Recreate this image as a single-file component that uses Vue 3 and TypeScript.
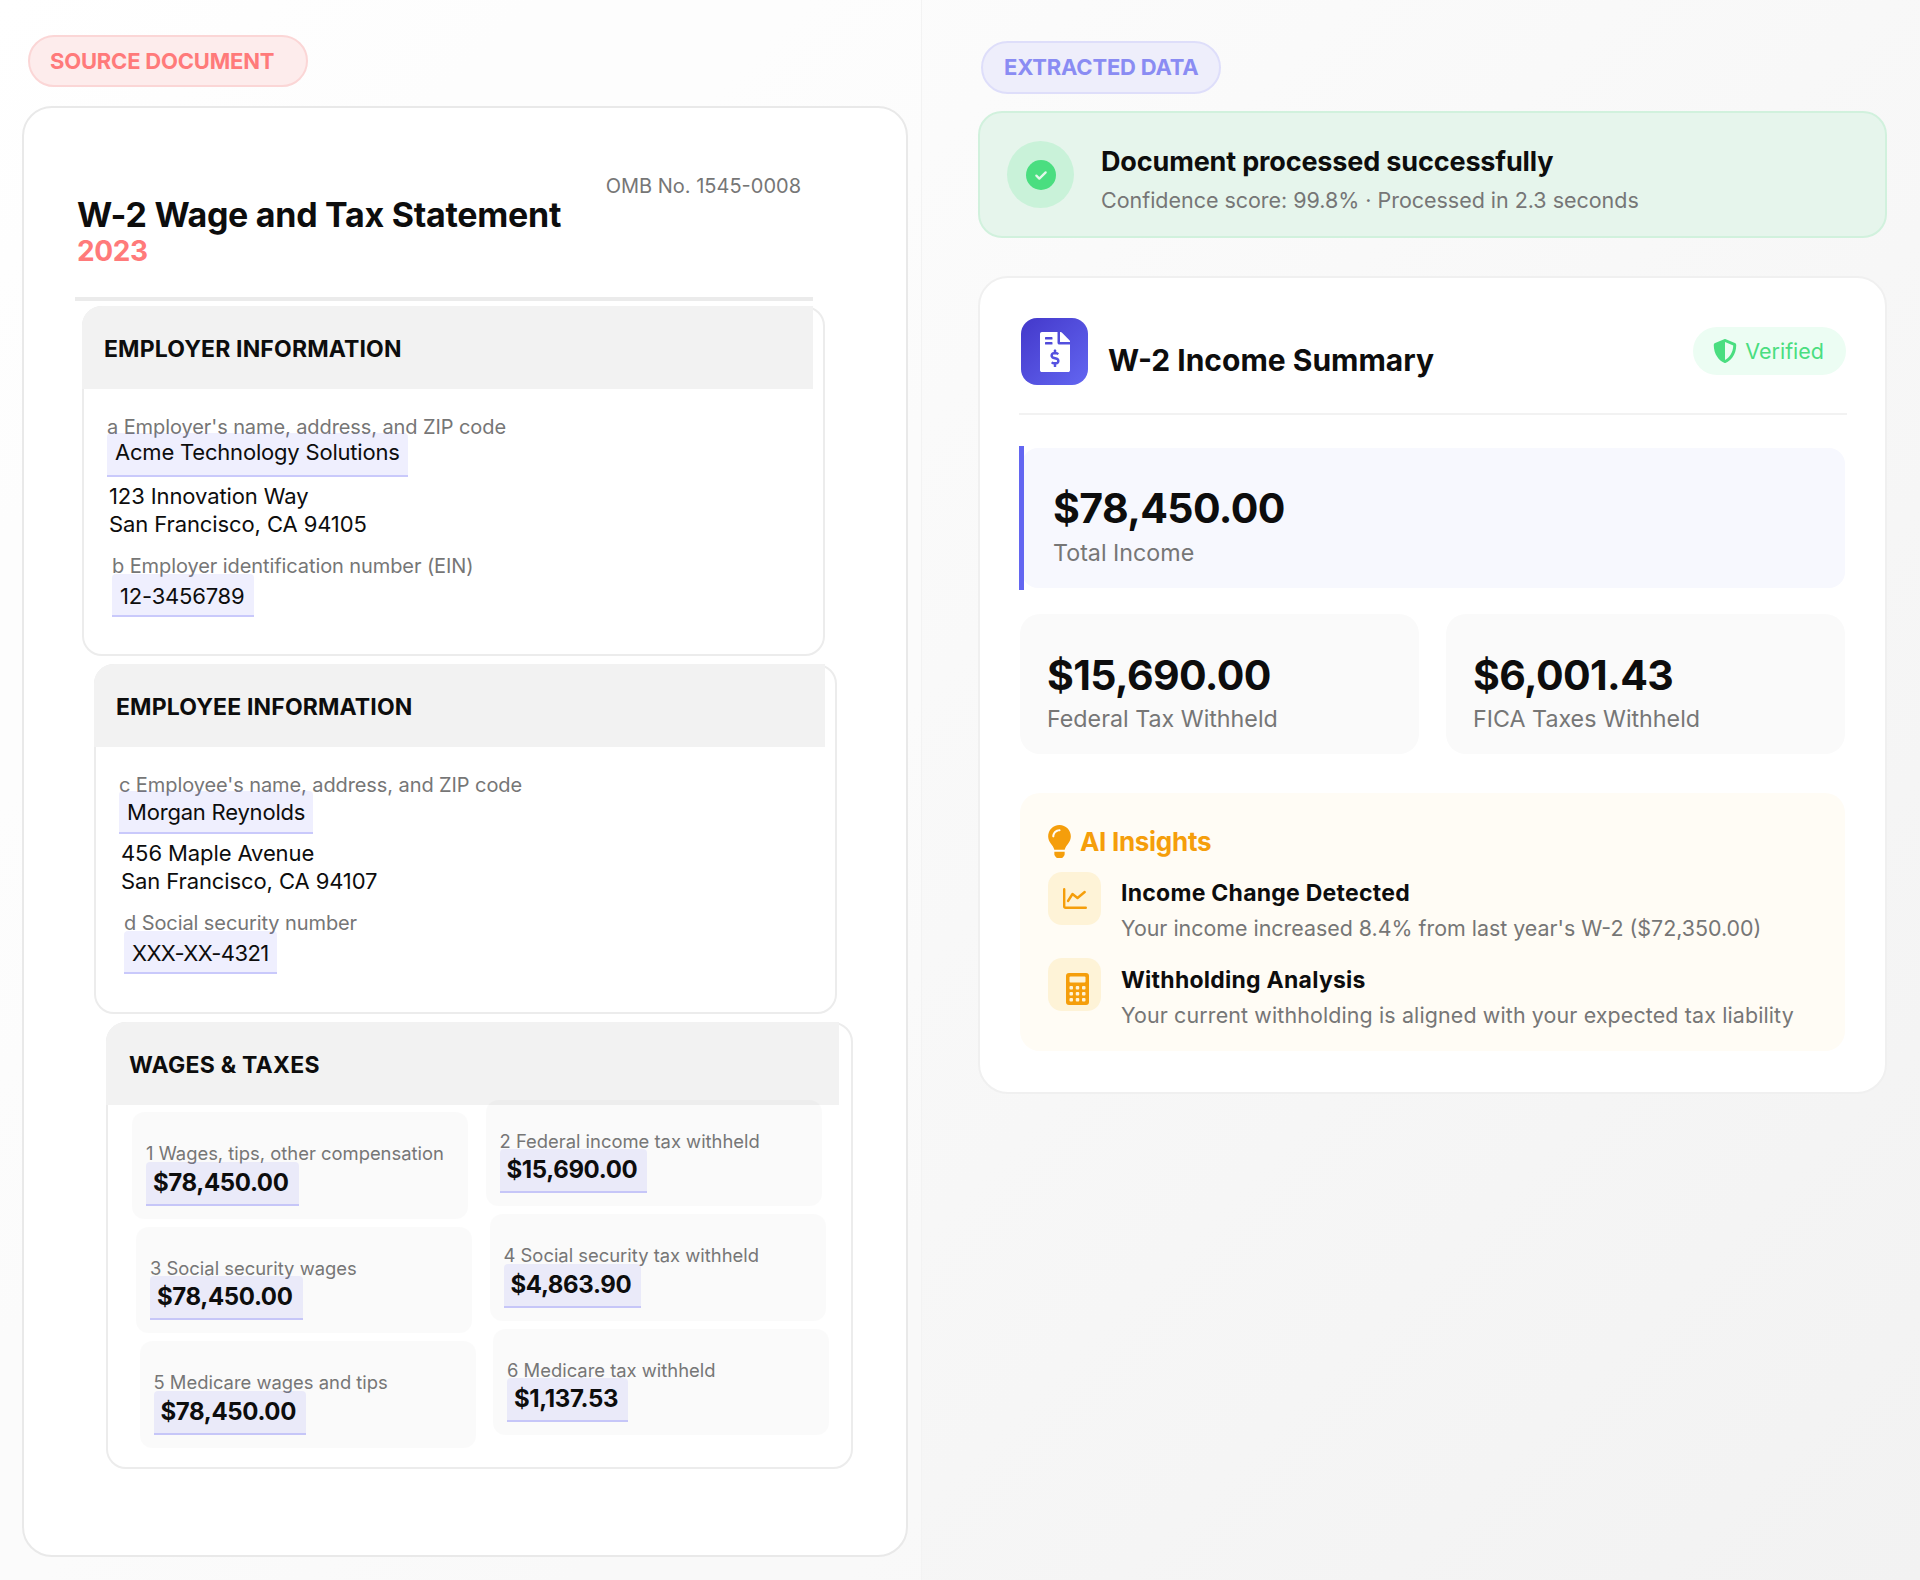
<script setup lang="ts">
interface Box {
  label: string
  value: string
}

const leftBoxes: Box[] = [
  { label: '1 Wages, tips, other compensation', value: '$78,450.00' },
  { label: '3 Social security wages', value: '$78,450.00' },
  { label: '5 Medicare wages and tips', value: '$78,450.00' },
]
const rightBoxes: Box[] = [
  { label: '2 Federal income tax withheld', value: '$15,690.00' },
  { label: '4 Social security tax withheld', value: '$4,863.90' },
  { label: '6 Medicare tax withheld', value: '$1,137.53' },
]
</script>

<template>
  <div class="page">
    <section class="source">
      <div class="pill pill-source">SOURCE DOCUMENT</div>
      <div class="doc">
        <div class="doc-inner">
          <header class="doc-head">
            <div>
              <h1 class="doc-title">W-2 Wage and Tax Statement</h1>
              <div class="doc-year">2023</div>
            </div>
            <div class="omb">OMB No. 1545-0008</div>
          </header>

          <div class="block block-1">
            <h2 class="block-head">EMPLOYER INFORMATION</h2>
            <div class="field">
              <div class="label">a Employer's name, address, and ZIP code</div>
              <span class="mark mark-name">Acme Technology Solutions</span>
              <div class="address">123 Innovation Way<br />San Francisco, CA 94105</div>
            </div>
            <div class="field field-second">
              <div class="label">b Employer identification number (EIN)</div>
              <span class="mark">12-3456789</span>
            </div>
          </div>

          <div class="block block-2">
            <h2 class="block-head">EMPLOYEE INFORMATION</h2>
            <div class="field">
              <div class="label">c Employee's name, address, and ZIP code</div>
              <span class="mark mark-name">Morgan Reynolds</span>
              <div class="address">456 Maple Avenue<br />San Francisco, CA 94107</div>
            </div>
            <div class="field field-second">
              <div class="label">d Social security number</div>
              <span class="mark">XXX-XX-4321</span>
            </div>
          </div>

          <div class="block block-3">
            <h2 class="block-head">WAGES &amp; TAXES</h2>
            <div class="tax-grid">
              <div class="tax-col">
                <div v-for="(b, i) in leftBoxes" :key="b.label" class="tax-box" :class="'step-' + i">
                  <div class="tax-label">{{ b.label }}</div>
                  <span class="mark mark-amount">{{ b.value }}</span>
                </div>
              </div>
              <div class="tax-col tax-col-right">
                <div v-for="(b, i) in rightBoxes" :key="b.label" class="tax-box" :class="'step-' + i">
                  <div class="tax-label">{{ b.label }}</div>
                  <span class="mark mark-amount">{{ b.value }}</span>
                </div>
              </div>
            </div>
          </div>
        </div>
      </div>
    </section>

    <section class="extracted">
      <div class="pill pill-extracted">EXTRACTED DATA</div>

      <div class="banner">
        <div class="banner-icon">
          <span class="banner-dot">
            <svg viewBox="0 0 24 24" width="16" height="16" fill="none" stroke="#e3f8ea" stroke-width="3.4" stroke-linecap="round" stroke-linejoin="round">
              <path d="M5 13l4.5 4.5L19 8" />
            </svg>
          </span>
        </div>
        <div class="banner-text">
          <div class="banner-title">Document processed successfully</div>
          <div class="banner-sub">Confidence score: 99.8% · Processed in 2.3 seconds</div>
        </div>
      </div>

      <div class="summary">
        <div class="summary-head">
          <div class="summary-icon">
            <svg viewBox="0 0 384 512" width="30" height="40" fill="#fff">
              <path d="M377 105L279.1 7c-4.5-4.5-10.6-7-17-7H256v128h128v-6.1c0-6.3-2.5-12.4-7-16.9zm-153 31V0H24C10.7 0 0 10.7 0 24v464c0 13.3 10.7 24 24 24h336c13.3 0 24-10.7 24-24V160H248c-13.2 0-24-10.8-24-24zM64 72c0-4.42 3.58-8 8-8h80c4.42 0 8 3.58 8 8v16c0 4.42-3.58 8-8 8H72c-4.42 0-8-3.58-8-8V72zm0 80v-16c0-4.42 3.58-8 8-8h80c4.42 0 8 3.58 8 8v16c0 4.42-3.58 8-8 8H72c-4.42 0-8-3.58-8-8zm144 263.88V440c0 4.42-3.58 8-8 8h-16c-4.42 0-8-3.58-8-8v-24.29c-11.29-.58-22.27-4.52-31.37-11.35-3.9-2.93-4.1-8.77-.57-12.14l11.75-11.21c2.77-2.64 6.89-2.76 10.13-.73 3.87 2.42 8.26 3.72 12.82 3.72h28.11c6.5 0 11.8-5.92 11.8-13.19 0-5.95-3.61-11.19-8.77-12.73l-45-13.5c-18.59-5.58-31.58-23.42-31.58-43.39 0-24.52 19.05-44.44 42.67-45.07V232c0-4.42 3.58-8 8-8h16c4.42 0 8 3.58 8 8v24.29c11.29.58 22.27 4.51 31.37 11.35 3.9 2.93 4.1 8.77.57 12.14l-11.75 11.21c-2.77 2.64-6.89 2.76-10.13.73-3.87-2.43-8.26-3.72-12.82-3.72h-28.11c-6.5 0-11.8 5.92-11.8 13.19 0 5.95 3.61 11.19 8.77 12.73l45 13.5c18.59 5.58 31.58 23.42 31.58 43.39 0 24.53-19.05 44.44-42.67 45.07z" />
            </svg>
          </div>
          <h2 class="summary-title">W-2 Income Summary</h2>
          <div class="verified">
            <svg viewBox="0 0 512 512" width="24" height="24" fill="#4ade80">
              <path d="M466.5 83.7l-192-80a48.15 48.15 0 0 0-36.9 0l-192 80C27.7 91.1 16 108.6 16 128c0 198.5 114.5 335.7 221.5 380.3 11.8 4.9 25.1 4.9 36.9 0C360.1 472.6 496 349.3 496 128c0-19.4-11.7-36.9-29.5-44.3zM256.1 446.3l-.1-381 175.9 73.3c-3.3 151.4-82.1 261.1-175.8 307.7z" />
            </svg>
            <span>Verified</span>
          </div>
        </div>

        <div class="total">
          <div class="amount">$78,450.00</div>
          <div class="amount-label">Total Income</div>
        </div>

        <div class="stats">
          <div class="stat">
            <div class="amount">$15,690.00</div>
            <div class="amount-label">Federal Tax Withheld</div>
          </div>
          <div class="stat">
            <div class="amount">$6,001.43</div>
            <div class="amount-label">FICA Taxes Withheld</div>
          </div>
        </div>

        <div class="insights">
          <div class="insights-head">
            <svg viewBox="0 0 352 512" width="23" height="33" fill="#f59e0b">
              <path d="M96.06 454.35c.01 6.29 1.87 12.45 5.36 17.69l17.09 25.69a31.99 31.99 0 0 0 26.64 14.28h61.71a31.99 31.99 0 0 0 26.64-14.28l17.09-25.69a31.989 31.989 0 0 0 5.36-17.69l.04-38.35H96.01l.05 38.35zM0 176c0 44.37 16.45 84.85 43.56 115.78 16.52 18.85 42.36 58.23 52.21 91.45.04.26.07.52.11.78h160.24c.04-.26.07-.51.11-.78 9.85-33.22 35.69-72.6 52.21-91.45C335.55 260.85 352 220.37 352 176 352 78.61 272.91-.3 175.45 0 73.44.31 0 82.97 0 176zm176-80c-44.11 0-80 35.89-80 80 0 8.84-7.16 16-16 16s-16-7.16-16-16c0-61.76 50.24-112 112-112 8.84 0 16 7.16 16 16s-7.16 16-16 16z" />
            </svg>
            <span>AI Insights</span>
          </div>

          <div class="insight">
            <div class="insight-icon">
              <svg viewBox="0 0 24 21" width="24" height="21" fill="none" stroke="#f59e0b" stroke-width="2.4" stroke-linecap="round" stroke-linejoin="round">
                <path d="M1.2 1.2v17a1.500 1.500 0 0 0 1.500 1.500H22.800" />
                <path d="M5 13l4.500-7 5 4 7.200-6" />
              </svg>
            </div>
            <div>
              <div class="insight-title">Income Change Detected</div>
              <div class="insight-text">Your income increased 8.4% from last year's W-2 ($72,350.00)</div>
            </div>
          </div>

          <div class="insight">
            <div class="insight-icon">
              <svg class="calc" viewBox="0 0 23 32" width="23" height="32">
                <rect width="23" height="32" rx="3" fill="#f59e0b" />
                <rect x="3.500" y="3.500" width="16" height="6" rx="1" fill="#fef3d7" />
                <g fill="#fef3d7">
                  <rect x="3.500" y="13" width="3.500" height="3.500" rx="1" />
                  <rect x="9.750" y="13" width="3.500" height="3.500" rx="1" />
                  <rect x="16" y="13" width="3.500" height="3.500" rx="1" />
                  <rect x="3.500" y="19" width="3.500" height="3.500" rx="1" />
                  <rect x="9.750" y="19" width="3.500" height="3.500" rx="1" />
                  <rect x="16" y="19" width="3.500" height="3.500" rx="1" />
                  <rect x="3.500" y="25" width="3.500" height="3.500" rx="1" />
                  <rect x="9.750" y="25" width="3.500" height="3.500" rx="1" />
                  <rect x="16" y="25" width="3.500" height="3.500" rx="1" />
                </g>
              </svg>
            </div>
            <div>
              <div class="insight-title">Withholding Analysis</div>
              <div class="insight-text insight-text-wide">Your current withholding is aligned with your expected tax liability</div>
            </div>
          </div>
        </div>
      </div>
    </section>
  </div>
</template>

<style>
html,
body {
  margin: 0;
  background: #f5f5f5;
}
</style>

<style scoped>
.page {
  display: flex;
  width: 1920px;
  height: 1580px;
  overflow: hidden;
  background: linear-gradient(135deg, #ffffff 0%, #f2f2f2 100%);
  font-family: Inter, "Liberation Sans", sans-serif;
  color: #0d0d0d;
}
h1,
h2 {
  margin: 0;
}

.source {
  box-sizing: border-box;
  width: 922px;
  padding: 35px 0 0 23px;
  background: rgba(255, 255, 255, 0.3);
  border-right: 1px solid #f3f3f3;
}
.pill {
  box-sizing: border-box;
  display: flex;
  align-items: center;
  border-radius: 30px;
  font-size: 22px;
  font-weight: 700;
  letter-spacing: -0.2px;
}
.pill-source {
  width: 280px;
  height: 52px;
  margin-left: 5px;
  padding: 0 0 1px 20px;
  color: #ff7a7a;
  background: #fdecec;
  border: 2px solid #fbd6d6;
}
.doc {
  box-sizing: border-box;
  width: 886px;
  height: 1451px;
  margin: 19px 0 0 -1px;
  padding: 87px 0 0 51px;
  background: #fff;
  border: 2px solid #e9e9e9;
  border-radius: 30px;
}
.doc-inner {
  width: 738px;
}
.doc-head {
  display: flex;
  justify-content: space-between;
  padding: 0 12px 28px 2px;
  border-bottom: 4px solid #ebebeb;
}
.doc-title {
  font-size: 34px;
  line-height: 40px;
  font-weight: 700;
  letter-spacing: -0.28px;
}
.doc-year {
  margin-top: -2px;
  font-size: 28px;
  line-height: 36px;
  font-weight: 700;
  letter-spacing: -0.4px;
  color: #ff7a7a;
}
.omb {
  margin-top: -21px;
  font-size: 20px;
  line-height: 24px;
  color: #767676;
}

.block {
  box-sizing: border-box;
  border: 2px solid #ececec;
  border-radius: 20px;
}
.block-1 {
  width: 743px;
  height: 350px;
  margin: 5px 0 0 7px;
}
.block-2 {
  width: 743px;
  height: 350px;
  margin: 8px 0 0 19px;
}
.block-3 {
  width: 747px;
  height: 447px;
  margin: 8px 0 0 31px;
}
.block-head {
  box-sizing: border-box;
  height: 83px;
  width: 731px;
  margin: -2px 0 0 -2px;
  padding-left: 22px;
  font-size: 23px;
  line-height: 86px;
  font-weight: 700;
  letter-spacing: 0.15px;
  background: #f2f2f2;
  border-radius: 20px 0 0 0;
}
.block-3 .block-head {
  width: 733px;
  padding-left: 23px;
  letter-spacing: 0.25px;
}

.field {
  margin: 26px 0 0 23px;
}
.field-second {
  margin: 16px 0 0 28px;
}
.label {
  font-size: 20px;
  line-height: 24px;
  letter-spacing: -0.09px;
  margin-bottom: -6px;
  color: #767676;
}
.field-second .label {
  margin-bottom: -4.500px;
}
.mark {
  box-sizing: border-box;
  display: inline-block;
  height: 42px;
  padding: 4px 8px 0;
  font-size: 22px;
  line-height: 30px;
  letter-spacing: -0.2px;
  background: rgba(99, 102, 241, 0.1);
  border-bottom: 2px solid rgba(99, 102, 241, 0.28);
  border-radius: 4px 4px 0 0;
}
.field-second .mark {
  height: 43px;
  padding: 7.500px 10px 0 8px;
}
.block-2 .field-second .mark {
  padding-right: 8px;
  letter-spacing: -0.6px;
}
.mark-name {
  height: 44px;
}
.block-2 .mark-name {
  height: 43px;
  padding-top: 6px;
}
.mark-amount {
  height: 44px;
  padding: 6px 10px 0 7px;
  font-size: 24px;
  font-weight: 700;
  letter-spacing: -0.37px;
}
.address {
  margin: 5px 0 0 2px;
  font-size: 22px;
  line-height: 28px;
  letter-spacing: -0.1px;
}

.tax-grid {
  display: flex;
  gap: 17.500px;
  margin: 7px 0 0 24px;
}
.tax-col {
  display: flex;
  flex-direction: column;
  gap: 8px;
  flex: 0 0 336px;
  min-width: 0;
}
.tax-col-right {
  margin-top: -12.500px;
}
.tax-box {
  box-sizing: border-box;
  flex: none;
  width: 336px;
  height: 106.500px;
  padding: 30px 0 0 14px;
  background: rgba(0, 0, 0, 0.02);
  border-radius: 12px;
}
.step-1 {
  margin-left: 4px;
}
.step-2 {
  margin-left: 7.500px;
}
.tax-label {
  margin-bottom: -2.500px;
  font-size: 18.400px;
  line-height: 22px;
  color: #767676;
}

.extracted {
  box-sizing: border-box;
  width: 998px;
  padding: 41px 33px 0 56px;
}
.pill-extracted {
  width: 240px;
  height: 53px;
  margin-left: 3px;
  padding: 0 0 1px 21px;
  color: #8a8cf3;
  background: #eeeefb;
  border: 2px solid #dedefa;
}
.banner {
  box-sizing: border-box;
  display: flex;
  align-items: center;
  gap: 27px;
  height: 127px;
  margin-top: 17px;
  padding-left: 27px;
  background: #e6f5ec;
  border: 2px solid #d1f1dd;
  border-radius: 24px;
}
.banner-icon {
  display: flex;
  align-items: center;
  justify-content: center;
  width: 67px;
  height: 67px;
  border-radius: 50%;
  background: #c9f2d9;
}
.banner-dot {
  display: flex;
  align-items: center;
  justify-content: center;
  width: 30px;
  height: 30px;
  border-radius: 50%;
  background: #4ade80;
}
.banner-text {
  padding-top: 10px;
}
.banner-title {
  font-size: 27px;
  line-height: 36px;
  font-weight: 700;
  letter-spacing: -0.15px;
}
.banner-sub {
  margin-top: 5px;
  font-size: 21.500px;
  line-height: 30px;
  letter-spacing: -0.03px;
  color: #767676;
}

.summary {
  box-sizing: border-box;
  height: 818px;
  margin-top: 38px;
  padding: 40px 39px 0 40px;
  background: #fff;
  border: 2px solid #f0f0f0;
  border-radius: 30px;
}
.summary-head {
  display: flex;
  align-items: flex-start;
  margin: 0 -1px;
  padding: 0 1px 28px 2px;
  border-bottom: 2px solid #f2f2f2;
}
.summary-icon {
  display: flex;
  align-items: center;
  justify-content: center;
  flex: 0 0 67px;
  height: 67px;
  border-radius: 16px;
  background: linear-gradient(135deg, #4338ca, #6366f1);
}
.summary-title {
  flex: 1;
  margin: 22px 0 0 20px;
  font-size: 30px;
  line-height: 40px;
  font-weight: 700;
}
.verified {
  display: flex;
  align-items: center;
  gap: 8px;
  height: 48px;
  margin: 9px 0 0;
  padding: 0 22px 0 20px;
  font-size: 21.500px;
  color: #4ade80;
  background: #ecfdf3;
  border-radius: 24px;
}

.total {
  position: relative;
  box-sizing: border-box;
  height: 140px;
  margin: 33px 1px 0 2px;
  padding: 37px 0 0 31px;
  background: #f7f8fe;
  border-radius: 16px;
}
.total::before {
  content: "";
  position: absolute;
  left: -3px;
  top: -2px;
  bottom: -2px;
  width: 5px;
  background: #6366f1;
}
.amount {
  font-size: 41px;
  line-height: 46px;
  font-weight: 700;
  letter-spacing: -0.6px;
}
.amount-label {
  margin-top: 5.500px;
  font-size: 23.250px;
  line-height: 32px;
  color: #767676;
}
.stats {
  display: flex;
  gap: 27px;
  margin: 26px 1px 0 0;
}
.stat {
  box-sizing: border-box;
  flex: 1;
  height: 140px;
  padding: 37.500px 0 0 27px;
  background: #fafafa;
  border-radius: 20px;
}
.insights {
  box-sizing: border-box;
  height: 258px;
  margin: 39px 1px 0 0;
  padding: 31.500px 27px 0 28px;
  background: #fffcf5;
  border-radius: 20px;
}
.insights-head {
  display: flex;
  align-items: center;
  gap: 9px;
  height: 33px;
  margin-bottom: -1.500px;
  font-size: 26px;
  font-weight: 700;
  letter-spacing: -0.3px;
  color: #f59e0b;
}
.insight {
  display: flex;
  gap: 20px;
  margin-top: 15.500px;
}
.insight-icon {
  display: flex;
  align-items: center;
  justify-content: center;
  flex: 0 0 53px;
  height: 53px;
  border-radius: 14px;
  background: #fef3d7;
}
.calc {
  margin: 8px 0 0 6px;
}
.insight-title {
  margin-top: 5.800px;
  font-size: 23px;
  line-height: 32px;
  font-weight: 700;
  letter-spacing: 0.25px;
}
.insight-text {
  margin-top: 3.500px;
  font-size: 21.400px;
  line-height: 30px;
  color: #767676;
}
.insight-text-wide {
  letter-spacing: 0.14px;
}
</style>
